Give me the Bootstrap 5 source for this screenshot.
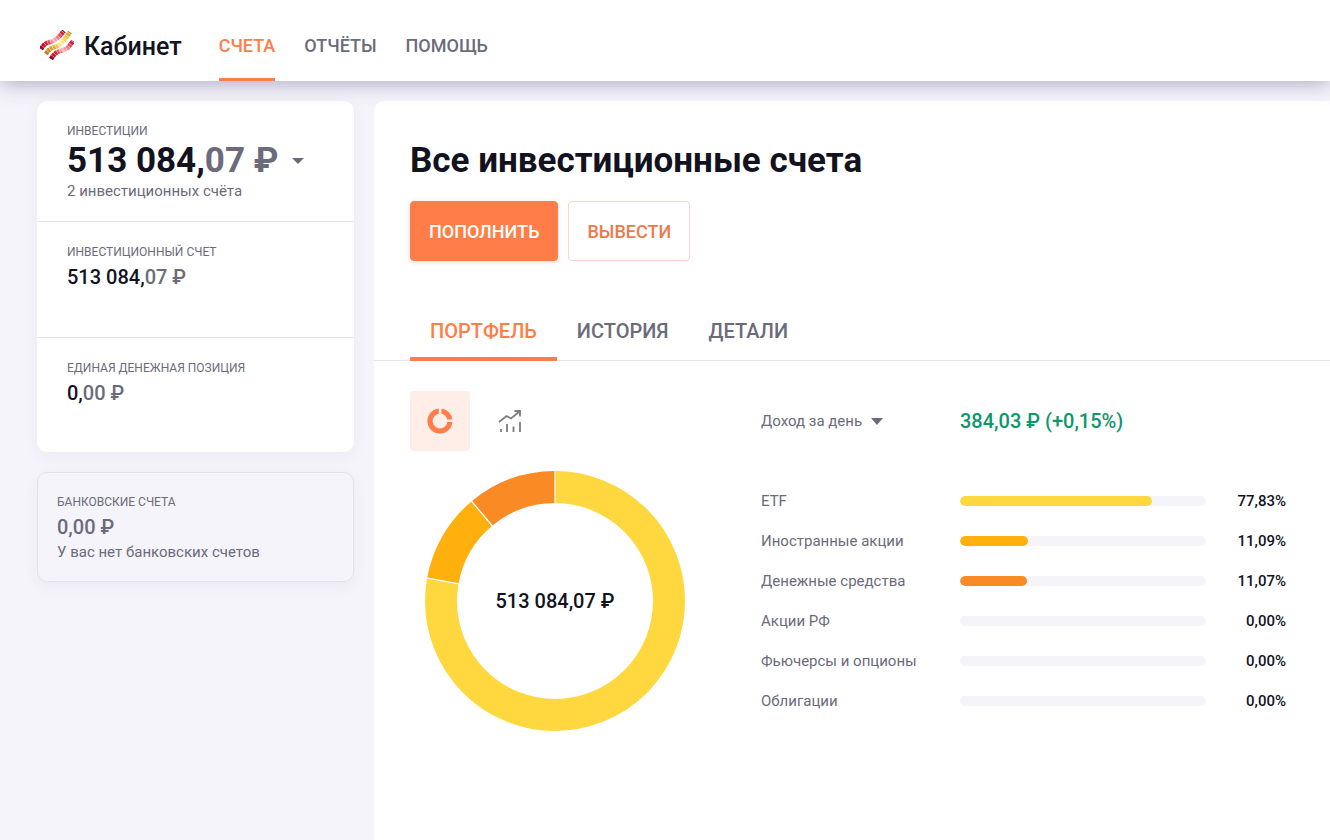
<!DOCTYPE html>
<html lang="ru">
<head>
<meta charset="utf-8">
<meta name="viewport" content="width=device-width, initial-scale=1">
<title>Кабинет</title>
<link href="https://cdn.jsdelivr.net/npm/bootstrap@5.3.0/dist/css/bootstrap.min.css" rel="stylesheet">
<style>
  :root { --ink: #12131f; --muted: #6b6b7b; --accent: #ff7d48; --line: #e6e6ec; --soft: #f5f4fa; }
  body { font-family: Roboto, "Liberation Sans", sans-serif; font-size: 15px; line-height: 20px; color: var(--ink); background: var(--soft); }
  a { text-decoration: none; }
  .topbar { background: #fff; padding: 0 40px; box-shadow: 0 2px 20px rgba(60,50,110,.4); z-index: 1; }
  .brand { font-size: 25px; font-weight: 500; line-height: 30px; color: var(--ink); gap: 10px; margin-right: 37px; padding-top: 12px; }
  .topnav { gap: 29px; }
  .topnav .nav-link { font-size: 18px; font-weight: 500; line-height: 24px; color: var(--muted); padding: 34px 0 20px; border-bottom: 3px solid transparent; }
  .topnav .nav-link.active { color: var(--accent); border-color: var(--accent); }
  .shell { padding: 20px 0 0 37px; gap: 20px; }
  .side { width: 317px; flex: none; gap: 20px; }
  .accounts { border-radius: 10px; overflow: hidden; background: #fff; }
  .accounts, .bank { box-shadow: 0 4px 16px rgba(60,50,110,.05); }
  .account { padding: 20px 30px 45px; border-bottom: 1px solid var(--line); }
  .account.total { padding-bottom: 20px; }
  .account:last-child { border: 0; padding-bottom: 44px; }
  .bank { border: 1px solid #e3e2ea; border-radius: 10px; background: var(--soft); padding: 19px; color: var(--muted); }
  .caption { font-size: 12px; line-height: 20px; color: var(--muted); text-transform: uppercase; }
  .sum { font-size: 20px; font-weight: 500; line-height: 30px; }
  .dim { color: var(--muted); }
  .bigsum { font-size: 35px; font-weight: 700; line-height: 40px; border: 0; background: none; padding: 0; color: var(--ink); gap: 14px; }
  .main { background: #fff; border-radius: 10px 0 0 0; min-height: calc(100vh - 101px); padding-top: 40px; }
  .inset { padding-left: 36px; padding-right: 44px; }
  h1 { font-size: 35px; font-weight: 700; line-height: 40px; margin-bottom: 20px; }
  .toolrow { gap: 10px; }
  .action { height: 60px; font-size: 18px; font-weight: 500; padding: 0 18px; border-radius: 4px; }
  .action-fill { --bs-btn-color: #fff; --bs-btn-bg: var(--accent); --bs-btn-border-color: var(--accent); --bs-btn-hover-bg: #f06e39; --bs-btn-hover-color: #fff; box-shadow: 0 1px 4px rgba(0,0,0,.16); }
  .action-line { --bs-btn-color: #f0794b; --bs-btn-border-color: #fbd5c8; --bs-btn-hover-color: var(--accent); --bs-btn-hover-border-color: var(--accent); }
  .sections { border-bottom: 1px solid var(--line); margin-top: 40px; padding-left: 36px; }
  .sections .nav-link { font-size: 20px; font-weight: 500; line-height: 20px; padding: 20px 20px 16px; margin-bottom: -1px; color: var(--muted); border-bottom: 4px solid transparent; border-radius: 0; }
  .sections .nav-link.active { color: var(--accent); border-color: var(--accent); }
  .report { padding-top: 30px; }
  .chart { width: 351px; flex: none; }
  .tool { width: 60px; height: 60px; border: 0; border-radius: 4px; padding: 0; background: none; }
  .tool.on { background: #ffeee8; }
  .donut { width: 260px; height: 260px; margin: 20px 0 0 15px; display: block; }
  .donut text { font-size: 20px; font-weight: 500; fill: var(--ink); }
  .daily { height: 60px; }
  .period { width: 199px; flex: none; border: 0; background: none; padding: 0; color: var(--muted); gap: 9px; }
  .gain { font-size: 20px; font-weight: 500; color: #0f9669; }
  .shares { table-layout: fixed; width: 100%; margin-top: 30px; }
  .shares th { width: 199px; font-weight: 400; color: var(--muted); white-space: nowrap; }
  .shares tr { height: 40px; }
  .shares th, .shares td { padding: 0; }
  .shares td:last-child { width: 80px; text-align: right; font-weight: 500; }
  .shares .progress { --bs-progress-height: 10px; --bs-progress-bg: var(--soft); --bs-progress-border-radius: 5px; }
  .shares .progress-bar { border-radius: 5px; }
  .c1 { background: #ffd83f; } .c2 { background: #ffb00c; } .c3 { background: #f98a24; }
</style>
</head>
<body>
<header class="topbar d-flex position-relative">
  <a class="brand d-flex align-items-center" href="#">
    <svg width="34" height="34" viewBox="0 0 34 34" fill="none" stroke-width="4.6" aria-hidden="true">
      <defs>
        <linearGradient id="r" x1="0" y1="1" x2="1" y2="0"><stop offset="0" stop-color="#97001c"/><stop offset=".3" stop-color="#d8253b"/><stop offset=".5" stop-color="#f8b6b8"/><stop offset=".68" stop-color="#ee8088"/><stop offset="1" stop-color="#b30025"/></linearGradient>
        <linearGradient id="g" x1="0" y1="1" x2="1" y2="0"><stop offset="0" stop-color="#b8781e"/><stop offset=".35" stop-color="#e9b43c"/><stop offset=".55" stop-color="#fff0a0"/><stop offset=".78" stop-color="#f5ce3c"/><stop offset="1" stop-color="#c98b22"/></linearGradient>
      </defs>
      <g stroke-dasharray="2.8 .4">
        <path stroke="url(#r)" d="M1 19C6 11 9 13 13 11S19 7 24 1"/>
        <path stroke="url(#g)" d="M6 24C11 16 15 18 19 15S25 9 30 2"/>
        <path stroke="url(#r)" d="M11 29C16 21 18 22 23 20S28 18 33 11"/>
      </g>
    </svg>
    Кабинет
  </a>
  <nav class="topnav d-flex" aria-label="Главное меню">
    <a class="nav-link active" href="#">СЧЕТА</a>
    <a class="nav-link" href="#">ОТЧЁТЫ</a>
    <a class="nav-link" href="#">ПОМОЩЬ</a>
  </nav>
</header>

<div class="shell d-flex">
  <aside class="side d-flex flex-column">
    <div class="accounts">
      <section class="account total">
        <div class="caption">Инвестиции</div>
        <button class="bigsum d-flex align-items-center" type="button"><span>513 084,<span class="dim">07 ₽</span></span>
          <svg width="12" height="6" viewBox="0 0 12 6" fill="#6b6b7b" aria-hidden="true"><path d="M0 0h12L6 6z"/></svg>
        </button>
        <div class="dim">2 инвестиционных счёта</div>
      </section>
      <section class="account">
        <div class="caption">Инвестиционный счет</div>
        <div class="sum">513 084,<span class="dim">07 ₽</span></div>
      </section>
      <section class="account">
        <div class="caption">Единая денежная позиция</div>
        <div class="sum">0,<span class="dim">00 ₽</span></div>
      </section>
    </div>
    <section class="bank">
      <div class="caption">Банковские счета</div>
      <div class="sum">0,00 ₽</div>
      <div>У вас нет банковских счетов</div>
    </section>
  </aside>

  <main class="main flex-grow-1">
    <div class="inset">
      <h1>Все инвестиционные счета</h1>
      <div class="d-flex toolrow">
        <button class="btn action action-fill" type="button">ПОПОЛНИТЬ</button>
        <button class="btn action action-line" type="button">ВЫВЕСТИ</button>
      </div>
    </div>
    <nav class="sections nav" aria-label="Разделы">
      <a class="nav-link active" href="#">ПОРТФЕЛЬ</a>
      <a class="nav-link" href="#">ИСТОРИЯ</a>
      <a class="nav-link" href="#">ДЕТАЛИ</a>
    </nav>
    <div class="report inset d-flex">
      <div class="chart">
        <div class="d-flex toolrow">
          <button class="tool on d-flex align-items-center justify-content-center" type="button" aria-label="Структура">
            <svg width="26" height="26" viewBox="-13 -13 26 26" fill="#ff7d48"><path d="M1.5-12.4A12.5 12.5 0 0 1 12.4-1.5H7.2A7.4 7.4 0 0 0 1.5-7.2ZM12.4 1A12.5 12.5 0 1 1-1.2-12.4V-7.3A7.4 7.4 0 1 0 7.3 1Z"/></svg>
          </button>
          <button class="tool d-flex align-items-center justify-content-center" type="button" aria-label="Динамика">
            <svg width="24" height="24" viewBox="0 0 24 24" fill="none" stroke="#7c7c84" stroke-width="1.8"><path d="M1 13 8.500 7l4.500 2.500 8.500-7M16.500 2h5.500v5.500M3 20v3M9 15v8M15.500 17.500v5.500M22 13v10"/></svg>
          </button>
        </div>
        <svg class="donut" viewBox="-130 -130 260 260" role="img" aria-label="Структура портфеля">
          <g fill="none" stroke-width="32" transform="rotate(-90)">
            <circle r="114" stroke="#ffd83f" pathLength="100" stroke-dasharray="77.83 22.17"/>
            <circle r="114" stroke="#ffb00c" pathLength="100" stroke-dasharray="11.1 88.9" stroke-dashoffset="-77.83"/>
            <circle r="114" stroke="#f98a24" pathLength="100" stroke-dasharray="11.07 88.93" stroke-dashoffset="-88.93"/>
          </g>
          <path stroke="#fff" stroke-width="1.300" d="M0-97V-131M-95.500-17.200-129-23.200M-62.100-74.500-84-100.500"/>
          <text x="0" y="7" text-anchor="middle">513 084,07 ₽</text>
        </svg>
      </div>
      <div class="flex-grow-1">
        <div class="daily d-flex align-items-center">
          <button class="period d-flex align-items-center" type="button">Доход за день
            <svg width="12" height="7" viewBox="0 0 12 7" fill="#6b6b7b" aria-hidden="true"><path d="M0 0h12L6 7z"/></svg>
          </button>
          <div class="gain">384,03 ₽ (+0,15%)</div>
        </div>
        <table class="shares">
          <tbody>
            <tr><th scope="row">ETF</th><td><div class="progress"><div class="progress-bar c1" style="width:78%"></div></div></td><td>77,83%</td></tr>
            <tr><th scope="row">Иностранные акции</th><td><div class="progress"><div class="progress-bar c2" style="width:27.6%"></div></div></td><td>11,09%</td></tr>
            <tr><th scope="row">Денежные средства</th><td><div class="progress"><div class="progress-bar c3" style="width:27.2%"></div></div></td><td>11,07%</td></tr>
            <tr><th scope="row">Акции РФ</th><td><div class="progress"></div></td><td>0,00%</td></tr>
            <tr><th scope="row">Фьючерсы и опционы</th><td><div class="progress"></div></td><td>0,00%</td></tr>
            <tr><th scope="row">Облигации</th><td><div class="progress"></div></td><td>0,00%</td></tr>
          </tbody>
        </table>
      </div>
    </div>
  </main>
</div>
<script src="https://cdn.jsdelivr.net/npm/bootstrap@5.3.0/dist/js/bootstrap.bundle.min.js"></script>
</body>
</html>
